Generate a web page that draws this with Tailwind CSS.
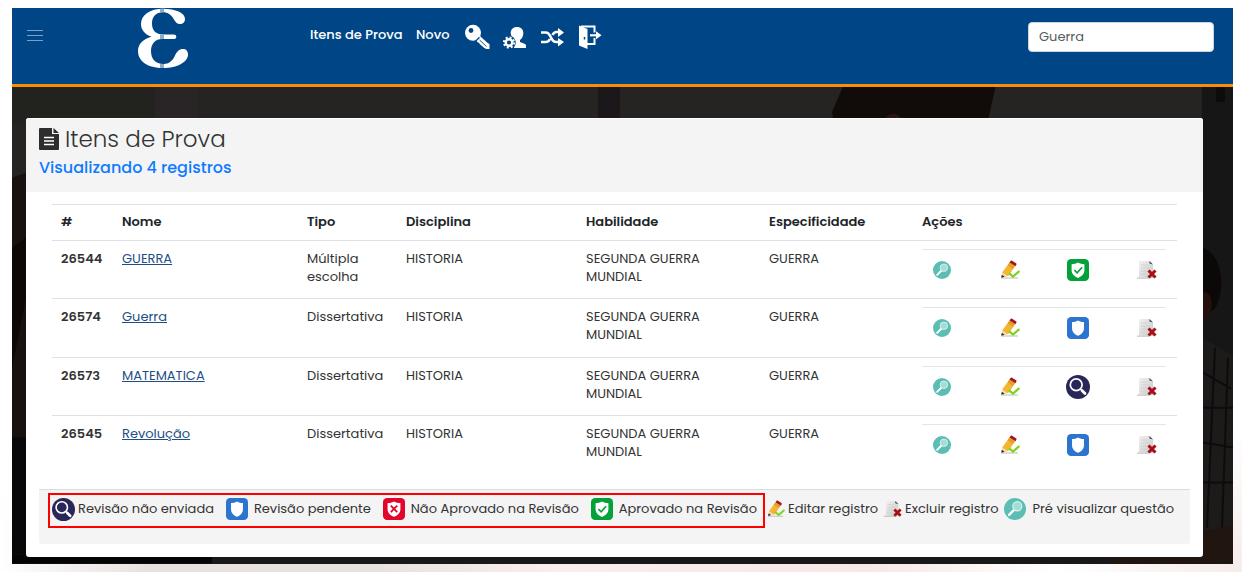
<!DOCTYPE html>
<html lang="pt-BR">
  <head>
    <meta charset="UTF-8" />
    <meta name="viewport" content="width=device-width, initial-scale=1.0" />
    <title>Itens de Prova</title>
    <script src="https://cdn.jsdelivr.net/npm/@tailwindcss/browser@4"></script>
    <script>
      const rows = [
        { id: 26544, nome: "GUERRA", tipo: "Múltipla escolha", status: "approved" },
        { id: 26574, nome: "Guerra", tipo: "Dissertativa", status: "pending" },
        { id: 26573, nome: "MATEMATICA", tipo: "Dissertativa", status: "unsent" },
        { id: 26545, nome: "Revolução", tipo: "Dissertativa", status: "pending" },
      ];

      const labels = {
        approved: "Aprovado na Revisão",
        pending: "Revisão pendente",
        unsent: "Revisão não enviada",
      };

      window.addEventListener("DOMContentLoaded", () => {
        const tbody = document.getElementById("itemsBody");

        rows.forEach((row) => {
          const tr = document.createElement("tr");
          tr.className = "h-[58px] even:h-[59px] border-t border-[#dee2e6] align-top";
          const size = row.status === "unsent" ? "size-6 -mx-px" : "size-[22px]";

          tr.innerHTML = `
            <th scope="row" class="px-[9px] pt-[9px] text-left font-semibold">${row.id}</th>
            <td class="px-[9px] pt-[9px]"><a href="#" class="text-[#1d4f86] underline">${row.nome}</a></td>
            <td class="px-[9px] pt-[9px]">${row.tipo}</td>
            <td class="px-[9px] pt-[9px]">HISTORIA</td>
            <td class="px-[9px] pt-[9px]">SEGUNDA GUERRA MUNDIAL</td>
            <td class="px-[9px] pt-[9px]">GUERRA</td>
            <td class="pt-2 pr-[11px] pl-[9px]">
              <div class="grid grid-cols-[67px_67px_70px_1fr] border-t border-[#e3e5e7] pt-2">
                <button class="flex h-6 items-center px-[11px]" aria-label="Pré visualizar questão"><svg class="size-[18px]"><use href="#i-preview" /></svg></button>
                <button class="flex h-6 items-center px-[11px]" aria-label="Editar registro"><svg class="size-5"><use href="#i-edit" /></svg></button>
                <button class="flex h-6 items-center px-[11px]" aria-label="${labels[row.status]}"><svg class="${size} shrink-0"><use href="#i-${row.status}" /></svg></button>
                <button class="flex h-6 items-center px-[11px]" aria-label="Excluir registro"><svg class="size-5 shrink-0"><use href="#i-delete" /></svg></button>
              </div>
            </td>
          `;
          tbody.appendChild(tr);
        });
      });
    </script>
  </head>
  <body class="min-h-screen bg-white bg-[linear-gradient(to_bottom,white_75%,transparent),linear-gradient(to_right,white,#e6e1df_12%,#e6e1df_30%,#fbeeec_45%,#f7e7e5_70%,white_85%,#f6eceb)] pt-2 pr-[9px] pb-2 pl-3 font-[Poppins,Inter,sans-serif] text-[13px] leading-[18px] text-[#333]">
    <!-- Icons -->
    <svg class="absolute size-0" aria-hidden="true">
      <defs>
        <linearGradient id="paper" x1="0" x2="1" y1="0" y2="1">
          <stop offset="0" stop-color="#f1f1f1" />
          <stop offset="1" stop-color="#c9c9c9" />
        </linearGradient>
      </defs>
      <symbol id="i-preview" viewBox="0 0 24 24">
        <circle cx="12" cy="12" r="12" fill="#5bbdb3" />
        <path d="M5.500 18.500l5.500-5.500" stroke="#fff" stroke-width="2.600" stroke-linecap="round" />
        <circle cx="14.500" cy="9" r="5" fill="#a5dcd7" stroke="#d8f2ef" stroke-width="1.200" />
      </symbol>
      <symbol id="i-unsent" viewBox="0 0 24 24">
        <circle cx="12" cy="12" r="12" fill="#29265a" />
        <circle cx="10.200" cy="9.800" r="5.900" fill="none" stroke="#fff" stroke-width="1.700" />
        <path d="M14.200 13.800l1.600 1.600" stroke="#fff" stroke-width="1.500" />
        <path d="M16 15.600l3 3" stroke="#fff" stroke-width="2.800" stroke-linecap="round" />
      </symbol>
      <symbol id="i-pending" viewBox="0 0 24 24">
        <rect width="24" height="24" rx="4.500" fill="#2b74cf" />
        <path d="M12 3.800c2.200 1.400 4.200 1.700 6.500 1.700v6.800c0 4-2.500 6.500-6.500 8.200-4-1.700-6.500-4.200-6.500-8.200V5.500c2.300 0 4.300-.3 6.500-1.700z" fill="#fff" />
      </symbol>
      <symbol id="i-rejected" viewBox="0 0 24 24">
        <rect width="24" height="24" rx="4.500" fill="#e2062c" />
        <path d="M12 3.800c2.200 1.400 4.500 1.700 7 1.700v6.800c0 4-2.700 6.500-7 8.200-4.300-1.700-7-4.200-7-8.200V5.500c2.500 0 4.800-.3 7-1.700z" fill="#fff" />
        <path d="M8.500 8.200l7 7.200m0-7.200l-7 7.200" stroke="#e2062c" stroke-width="2" />
      </symbol>
      <symbol id="i-approved" viewBox="0 0 24 24">
        <rect width="24" height="24" rx="4.500" fill="#02a139" />
        <path d="M12 3.800c2.200 1.400 4.500 1.700 7 1.800v6.800c0 4-2.700 6.600-7 8.300-4.300-1.700-7-4.300-7-8.300V5.600c2.500-.1 4.800-.4 7-1.800z" fill="#fff" />
        <path d="M8 12l3 3 5.500-6" fill="none" stroke="#02a139" stroke-width="1.800" />
      </symbol>
      <symbol id="i-edit" viewBox="0 0 20 20">
        <path d="M1 17.500h17v1H1z" fill="#bbb" />
        <path d="M2.500 12L9.500 2.500l5.500 3.500-6 9.500-6.500 2z" fill="#f2b632" />
        <path d="M7.500 5.200l2-2.700L15 6l-2 3z" fill="#dfa02c" />
        <path d="M2.500 12.500l5 3.500-6 1.800z" fill="#f6dcb0" />
        <path d="M1.800 14.800l2.700 2-3.200 1z" fill="#222" />
        <path d="M9.500 2.500l1-1.400c.4-.6 1-.7 1.600-.3l3.900 2.400c.6.4.7 1 .3 1.600L15.500 6.300z" fill="#a81519" />
        <path d="M9.800 13.800l3.200 2.800 5.700-5" fill="none" stroke="#7ed321" stroke-width="2.200" stroke-linecap="round" />
      </symbol>
      <symbol id="i-delete" viewBox="0 0 20 20">
        <path d="M0 17.600h12v1H0z" fill="#b5b5b5" />
        <path d="M2 1h10.500L16 4.500v13.500H2z" fill="url(#paper)" />
        <path d="M12.500 1L16 4.500l-3.500-1z" fill="#444" />
        <path d="M4 5h7M4 8h9M4 11h6M4 14h6" stroke="#cfcfcf" stroke-width=".8" />
        <path d="M11.500 10.500l7 7m0-7l-7 7" stroke="#a80f16" stroke-width="3" />
      </symbol>
    </svg>

    <div class="relative isolate bg-[#1b1919] pb-[7px]">
      <!-- Dimmed classroom backdrop -->
      <svg class="absolute inset-0 -z-10 size-full" viewBox="0 0 1221 556" preserveAspectRatio="none" aria-hidden="true">
        <rect width="1221" height="556" fill="#252423" />
        <path d="M0 76h145v40H0z" fill="#22221f" />
        <path d="M143 76h43v40h-43z" fill="#292426" />
        <path d="M586 76h22v40h-22z" fill="#1b171a" />
        <path d="M820 104l12-28h152l-9 42H822z" fill="#110b0a" />
        <path d="M872 118c-2-12 12-16 18-7l2 7z" fill="#2a1612" />
        <path d="M0 170l14-5v391H0z" fill="#17110f" />
        <path d="M0 240l14-10v60l-14 70z" fill="#0d0706" />
        <path d="M0 430h14v126H0z" fill="#08080b" />
        <path d="M1190 76h31v480h-31z" fill="#161617" />
        <path d="M1204 76h9v18h-9z" fill="#0d0c0c" />
        <path d="M1190 240c22 6 24 45 12 62l-12 6z" fill="#0c0808" />
        <path d="M1190 285c12-4 14 22 0 30z" fill="#24110e" />
        <path d="M1190 330l31 18v175h-31z" fill="#1d1b1a" />
        <path d="M1191 365l28 16M1191 400h30M1191 435l30 5M1191 475h30M1203 340l-8 180M1216 350l-6 170" stroke="#0d0c0d" stroke-width="2" />
        <path d="M0 547h1221v9H0z" fill="#19171a" />
        <path d="M0 547h200v9H0z" fill="#050506" />
        <path d="M1100 547l121-30v39h-121z" fill="#21150f" />
      </svg>

      <header class="flex h-[79px] items-start border-b-3 border-[#fb8c04] bg-[#004586] pr-[19px] pl-3.5 text-white">
        <button class="mt-5 text-[#7ba0c4]" aria-label="Menu">
          <svg class="h-3.5 w-[17px]" viewBox="0 0 17 14" fill="none" stroke="currentColor">
            <path d="M1 2.500h16M1 7.500h16M1 12.500h16" />
          </svg>
        </button>
        <a href="#" class="ml-[94px]" aria-label="Início">
          <svg class="h-[61px] w-[52px]" viewBox="0 0 52 61" fill="#fff">
            <path d="M26 .8C13 .8 4 7 4 16c0 6 4 10.500 10.500 12.700C6 31 1 36 1 43c0 10.500 10 17 25 17 14.500 0 25-6 25-13.500 0-3.500-2-5.500-5-5.500-4 0-6 2.500-8 6.500-2.500 5.500-6 8.500-11.500 8.500-8 0-12.500-5-12.500-13 0-7.500 4.500-12 11-12h11.500c1.800 0 2.800-.9 2.800-2.300s-1-2.200-2.800-2.200H26C19 26.500 15 22.500 15 15.500 15 8.500 19 4.200 26 4.200c5 0 8 2.500 10.500 6.500 2 3.500 3.500 5.300 6.500 5.300 3 0 5-2 5-5C48 5 38.500.8 26 .8z" />
            <path d="M25 .8v3.200M25 26.500v4.500M25 56v4" stroke="#8fadca" stroke-width="4" />
          </svg>
        </a>
        <nav class="ml-[121px] flex items-center pt-3">
          <a href="#" class="w-[106px] font-medium whitespace-nowrap">Itens de Prova</a>
          <a href="#" class="w-12 font-medium">Novo</a>
          <a href="#" class="mt-1 mr-3" aria-label="Senha">
            <svg class="size-[26px]" viewBox="0 0 26 26">
              <path d="M12 12.500l10.500 9.500" stroke="#fff" stroke-width="6" />
              <path d="M12 15.500l10 9.500h3.500v-5" fill="#fff" />
              <circle cx="9" cy="8.800" r="8" fill="#fff" />
              <circle cx="7" cy="6.500" r="2.400" fill="#004586" />
              <path d="M11 17.800l4.500-4.500" stroke="#004586" stroke-width="1.300" />
              <path d="M15.500 16l7 6.500" stroke="#004586" stroke-width=".9" />
              <path d="M13 20l1.500-1.500 1 1.500" fill="#004586" />
            </svg>
          </a>
          <a href="#" class="mt-1 mr-3.5" aria-label="Usuário">
            <svg class="size-6" viewBox="0 0 24 24" fill="#fff">
              <path d="M15 2c4 0 6.300 2.500 6.300 6.200 0 3-1.300 5.300-3.300 6.800v2l5 2c1 .5 1.300 1.500 1 4H12l1-8c-2-1.500-4.300-3.800-4.300-6.800C8.700 4.500 11 2 15 2z" />
              <circle cx="7" cy="17.500" r="6.800" fill="#004586" />
              <circle cx="7" cy="17.500" r="3.300" fill="none" stroke="#fff" stroke-width="2.400" />
              <circle cx="7" cy="17.500" r="5.100" fill="none" stroke="#fff" stroke-width="2" stroke-dasharray="2 2" />
            </svg>
          </a>
          <a href="#" class="mt-1 mr-3.5" aria-label="Alternar">
            <svg class="size-6" viewBox="0 0 24 24">
              <path d="M1 7.500h5c2 0 3 1 4.500 4l1 2c1 2 2 3.500 4.500 3.500h3M1 17h5c2 0 3-1 4-3M12.500 10c1-2 2-3 4-3h3" fill="none" stroke="#fff" stroke-width="2.600" />
              <path d="M18 3l6 4.500-6 4.500zM18 13l6 4-6 4.500z" fill="#fff" />
            </svg>
          </a>
          <a href="#" class="mt-1" aria-label="Sair">
            <svg class="h-[26px] w-6" viewBox="0 0 24 26">
              <path d="M3 2.500h13.500v6M9 20h7.500v-6" fill="none" stroke="#fff" stroke-width="2" />
              <path d="M1 1.500l8.500 3.500v20L1 21.500z" fill="#fff" />
              <path d="M6.500 13v2.500" stroke="#004586" stroke-width="1.500" />
              <path d="M12 11.300h6" stroke="#fff" stroke-width="2.200" />
              <path d="M18 7.300l5.500 4-5.500 4z" fill="#fff" />
            </svg>
          </a>
        </nav>
        <form class="ml-auto pt-3.5">
          <input type="search" value="Guerra" aria-label="Pesquisar" class="h-[30px] w-[186px] rounded-sm border border-[#ced4da] bg-white px-[10px] text-[13px] text-[#555b61]" />
        </form>
      </header>

      <main class="mt-[31px] mr-[30px] ml-3.5 rounded-[3px] bg-white pb-[13px]">
        <div class="h-[74px] rounded-t-[3px] border-t border-white bg-[#f4f4f4] px-[13px] pt-[7px]">
          <h1 class="flex items-center gap-1.5 text-[23px] leading-[26px] font-light">
            <svg class="h-[22px] w-5" viewBox="0 0 20 22">
              <path d="M1 0h12v6h7v15a1 1 0 0 1-1 1H1a1 1 0 0 1-1-1V1a1 1 0 0 1 1-1zM14.500 0L20 5h-5.500z" fill="#2d2d2d" />
              <path d="M5 9.500h10M5 13h10M5 16.500h10" stroke="#fff" stroke-width="1.500" />
            </svg>
            Itens de Prova
          </h1>
          <p class="pt-1.5 text-base leading-5 font-medium text-[#0d7bff]">Visualizando 4 registros</p>
        </div>

        <div class="px-[26px] pt-3">
          <table class="w-full table-fixed border-collapse">
            <colgroup>
              <col class="w-[61px]" />
              <col class="w-[185px]" />
              <col class="w-[99px]" />
              <col class="w-[180px]" />
              <col class="w-[183px]" />
              <col class="w-[153px]" />
              <col class="w-[264px]" />
            </colgroup>
            <thead>
              <tr class="h-9 border-t border-[#dee2e6] text-left text-[#212529]">
                <th class="px-[9px] pb-0.5 font-semibold">#</th>
                <th class="px-[9px] pb-0.5 font-semibold">Nome</th>
                <th class="px-[9px] pb-0.5 font-semibold">Tipo</th>
                <th class="px-[9px] pb-0.5 font-semibold">Disciplina</th>
                <th class="px-[9px] pb-0.5 font-semibold">Habilidade</th>
                <th class="px-[9px] pb-0.5 font-semibold">Especificidade</th>
                <th class="px-[9px] pb-0.5 font-semibold">Ações</th>
              </tr>
            </thead>
            <tbody id="itemsBody"></tbody>
          </table>
        </div>

        <!-- Legend -->
        <footer class="mx-[13px] mt-3.5 flex h-[55px] items-start rounded-b-[3px] border-t border-[#dcdcdc] bg-[#f4f4f4] pt-[3px] pl-[9px] whitespace-nowrap">
          <ul class="flex h-[35px] w-[717px] items-center justify-between border-2 border-[#f00] pr-1.5 pb-0.5 pl-0.5">
            <li class="flex items-center gap-[3px]"><svg class="size-[23px]"><use href="#i-unsent" /></svg>Revisão não enviada</li>
            <li class="flex items-center gap-1.5"><svg class="size-[22px]"><use href="#i-pending" /></svg>Revisão pendente</li>
            <li class="flex items-center gap-1.5"><svg class="size-[22px]"><use href="#i-rejected" /></svg>Não Aprovado na Revisão</li>
            <li class="flex items-center gap-1.5"><svg class="size-[22px]"><use href="#i-approved" /></svg>Aprovado na Revisão</li>
          </ul>
          <ul class="flex h-[35px] flex-1 items-center justify-between pr-4 pb-0.5 pl-0.5">
            <li class="flex items-center gap-[3px]"><svg class="size-[18px]"><use href="#i-edit" /></svg>Editar registro</li>
            <li class="flex items-center gap-[3px]"><svg class="size-[18px]"><use href="#i-delete" /></svg>Excluir registro</li>
            <li class="flex items-center gap-1.5"><svg class="size-[22px]"><use href="#i-preview" /></svg>Pré visualizar questão</li>
          </ul>
        </footer>
      </main>
    </div>
  </body>
</html>
